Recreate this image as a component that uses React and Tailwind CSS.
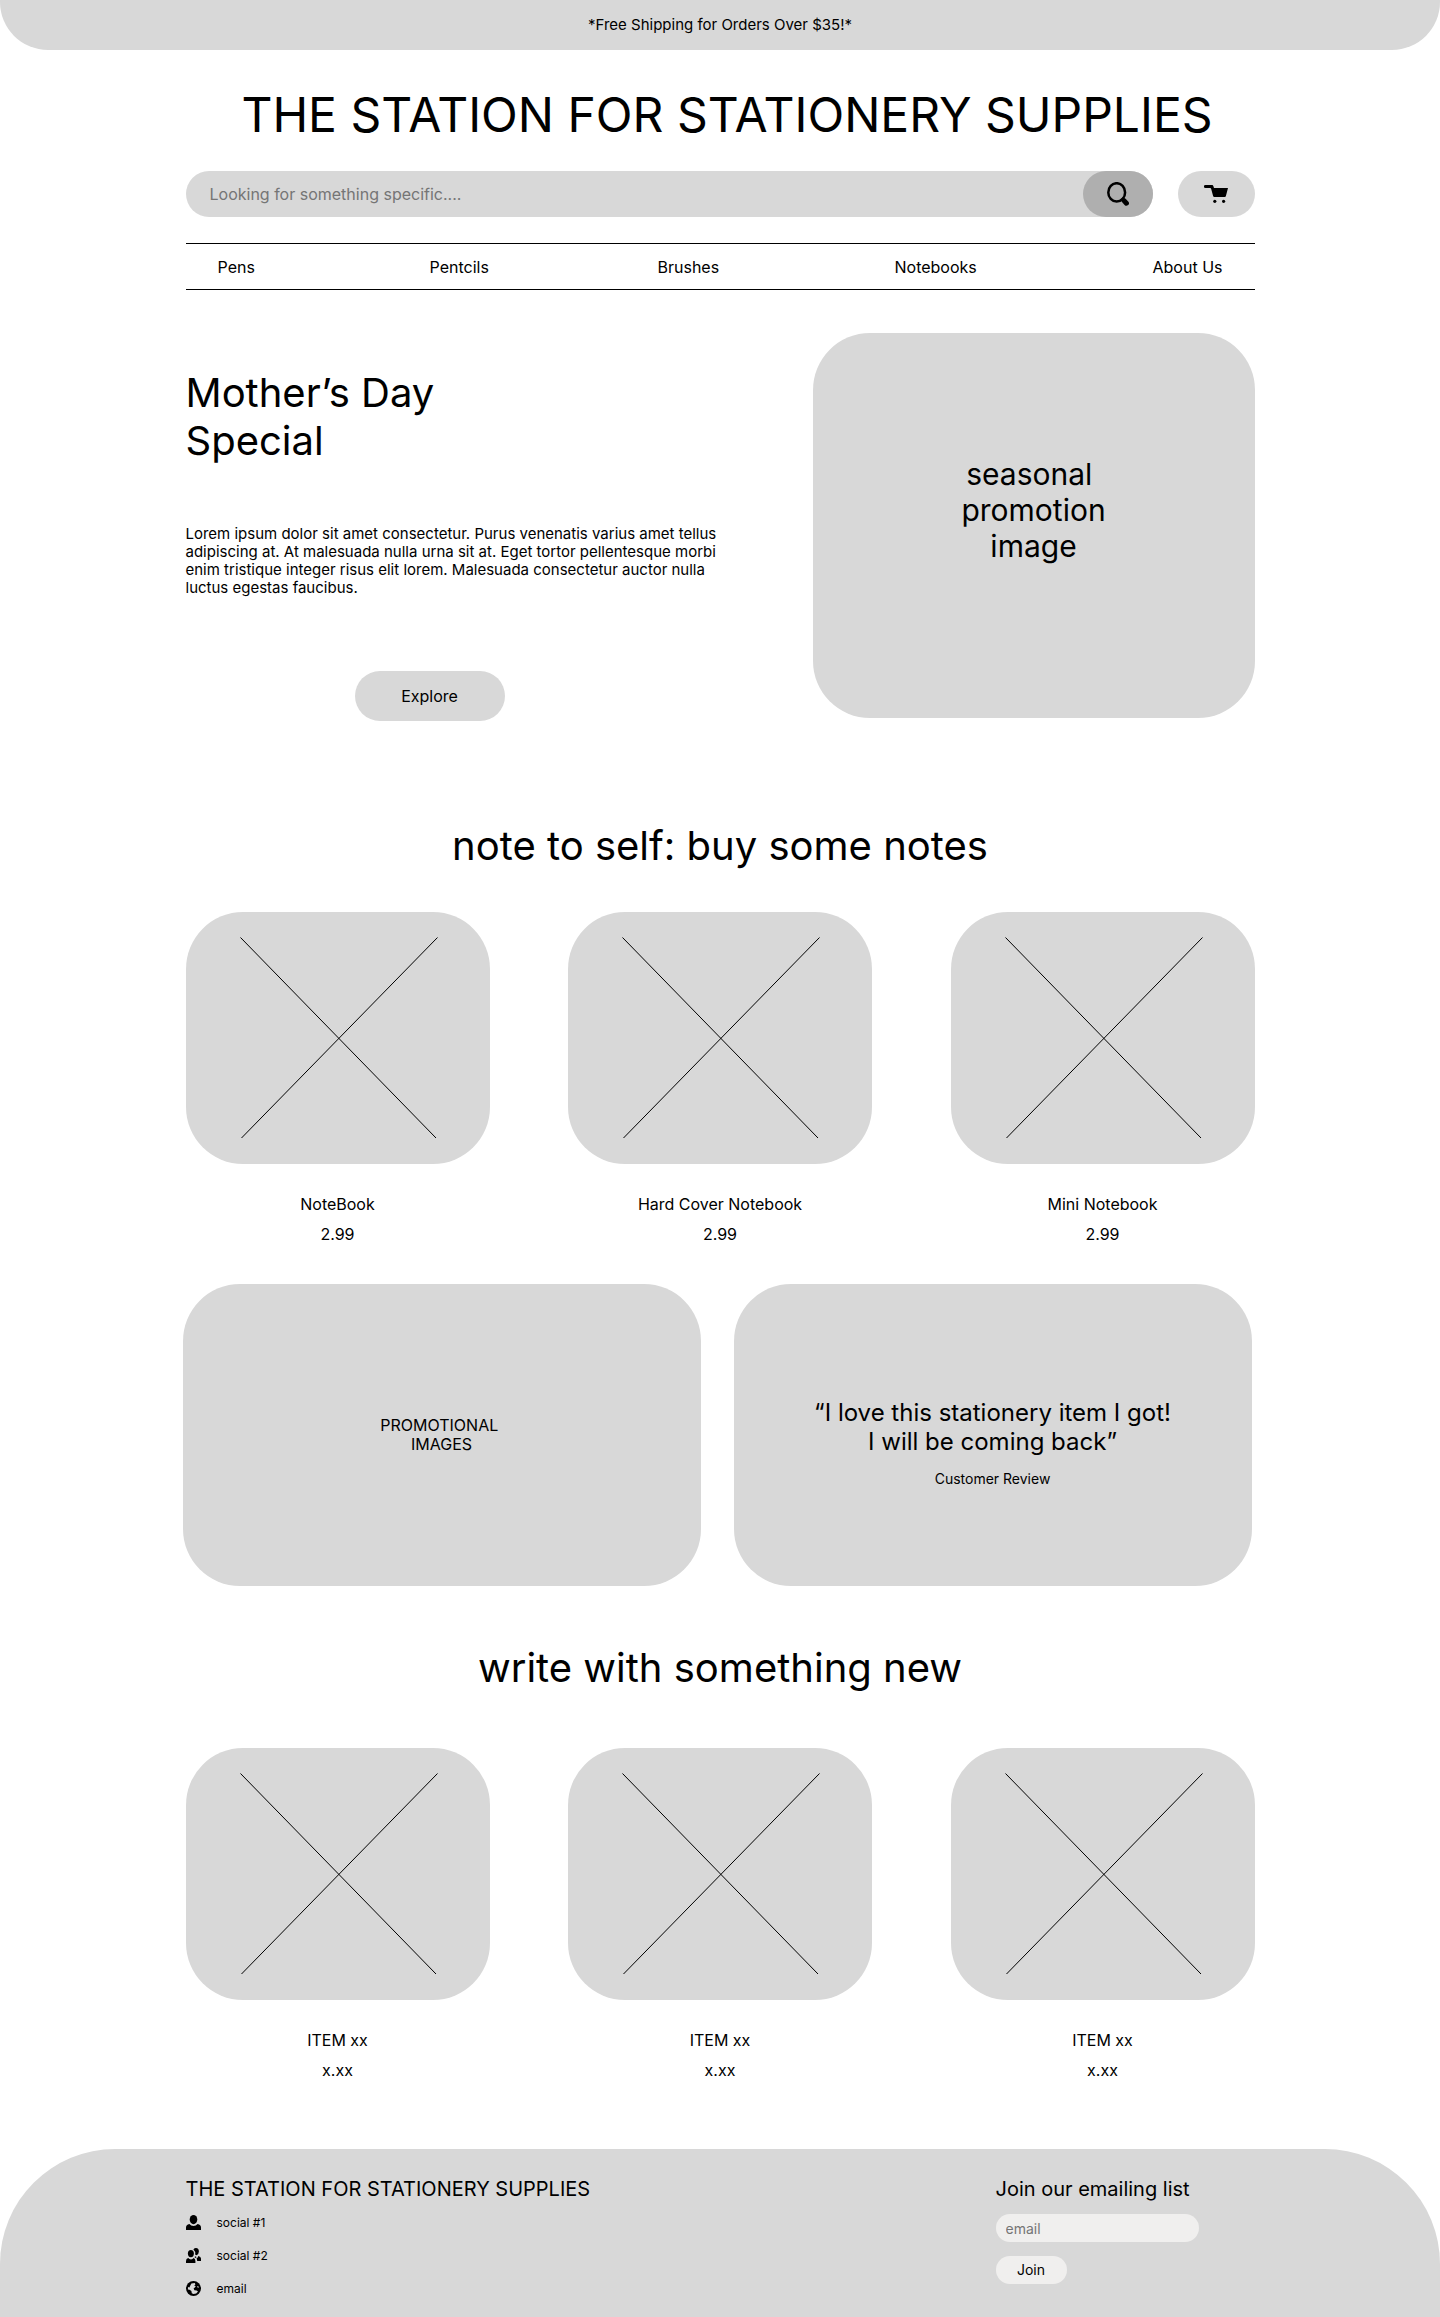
const navItems = ["Pens", "Pentcils", "Brushes", "Notebooks", "About Us"];

const notebooks = [
  { name: "NoteBook", price: "2.99" },
  { name: "Hard Cover Notebook", price: "2.99" },
  { name: "Mini Notebook", price: "2.99" },
];

const writingItems = [
  { name: "ITEM xx", price: "x.xx" },
  { name: "ITEM xx", price: "x.xx" },
  { name: "ITEM xx", price: "x.xx" },
];

function SearchIcon() {
  return (
    <svg width="22" height="24" viewBox="0 0 22 24" fill="none" stroke="black" aria-hidden="true">
      <ellipse cx="9.7" cy="10.4" rx="8.4" ry="9.2" strokeWidth="2.5" />
      <path d="M14.5 16.5 L16.5 18.5" strokeWidth="3.5" />
      <path d="M17 18.6 L19.4 21.2" strokeWidth="5" strokeLinecap="round" />
    </svg>
  );
}

function CartIcon() {
  return (
    <svg width="24" height="18" viewBox="0 0 24 18" fill="black" aria-hidden="true">
      <path d="M1.4 0 H8.2 Q9 0 9.3 0.9 L10 3 H24 L21.9 11 Q21.7 12 20.7 12 H10.3 Q9.4 12 9.1 11 L7.2 4 Q7 3 6.2 3 H1.4 A1.5 1.5 0 0 1 1.4 0 Z" />
      <circle cx="10.8" cy="16.3" r="1.6" />
      <circle cx="19.6" cy="16.3" r="1.6" />
    </svg>
  );
}

function PersonIcon() {
  return (
    <svg width="15" height="15" viewBox="0 0 15 15" fill="black" aria-hidden="true">
      <ellipse cx="7.5" cy="4.6" rx="3.8" ry="4.6" />
      <path d="M0 15 V12.5 Q0 9.8 3.4 9 Q5 11 7.5 11 Q10 11 11.6 9 Q15 9.8 15 12.5 V15 Z" />
    </svg>
  );
}

function PeopleIcon() {
  return (
    <svg width="15" height="15" viewBox="0 0 15 15" fill="black" aria-hidden="true">
      <ellipse cx="4.9" cy="5.6" rx="3" ry="3.7" />
      <path d="M0 15 V13 Q0 10.7 2.2 10.1 Q3.4 11.4 5 11.4 Q6.6 11.4 7.6 10.1 Q9.4 10.8 9.4 13 V15 Z" />
      <path d="M7.4 1.4 Q8.4 0 10 0 Q12.9 0.2 12.9 3.6 Q12.8 6.4 10.6 7.2 Q9.6 7.2 9.2 6.6 Q9.6 3 7.4 1.4 Z" />
      <path d="M8.4 9 L10 8.2 L10.4 9.8 L9.6 10 Z" />
      <path d="M12.3 8 Q15 8.6 15 10.6 V13 H11.2 Q11 11.4 10.5 10.6 Q12 9.6 12.3 8 Z" />
    </svg>
  );
}

function GlobeIcon() {
  return (
    <svg width="15" height="15" viewBox="0 0 15 15" aria-hidden="true">
      <circle cx="7.5" cy="7.5" r="7.5" fill="black" />
      <path
        d="M5.4 2.6 L8.8 1.9 L9.4 3.4 L8.2 4.4 L9.8 5.2 L8.8 6.4 L7.6 7.6 L8.4 9.2 L10.6 9.4 L12 10.4 L10.2 12.4 L7.4 13.1 L5.8 12.2 L5.4 10 L3.6 8.8 L1.9 8.6 L2 6 L3.4 6.4 L4.2 4.8 Z"
        fill="#d8d8d8"
      />
      <path d="M11.4 5 L12.9 5.8 L12.6 6.8 L11.2 6.2 Z" fill="#d8d8d8" />
    </svg>
  );
}

const contacts = [
  { label: "social #1", Icon: PersonIcon },
  { label: "social #2", Icon: PeopleIcon },
  { label: "email", Icon: GlobeIcon },
];

function ProductCard({ name, price }) {
  return (
    <li className="flex w-[304px] flex-col items-center text-base leading-[19px]">
      <div className="flex h-[252px] w-full items-center justify-center rounded-[57px] bg-[#d8d8d8]">
        <svg width="200" height="202" viewBox="0 0 200 202" stroke="black" strokeWidth="1" aria-hidden="true">
          <path d="M2.5 0.5 L198 201 M199.5 0.5 L3.5 201" />
        </svg>
      </div>
      <h3 className="mt-[31px]">{name}</h3>
      <p className="mt-[11px]">{price}</p>
    </li>
  );
}

function ProductRow({ items }) {
  return (
    <ul className="flex flex-wrap justify-between gap-y-10">
      {items.map((item, i) => (
        <ProductCard key={i} {...item} />
      ))}
    </ul>
  );
}

export default function App() {
  return (
    <div className="bg-white font-['Inter',sans-serif] text-black">
      <p className="flex h-[50px] items-center justify-center rounded-b-[48px] bg-[#d8d8d8] text-[15px] leading-[18px]">
        *Free Shipping for Orders Over $35!*
      </p>

      <header className="mx-auto max-w-[1069px]">
        <h1 className="mt-9 pl-3.5 text-center text-5xl leading-[58px]">THE STATION FOR STATIONERY SUPPLIES</h1>
        <div className="mt-[27px] flex gap-[25px]">
          <form className="flex h-[46px] flex-1 rounded-full bg-[#d8d8d8]" onSubmit={(e) => e.preventDefault()}>
            <input
              type="search"
              aria-label="Search products"
              placeholder="Looking for something specific...."
              className="min-w-0 flex-1 rounded-full bg-transparent pl-6 text-base placeholder:text-[#757575]"
            />
            <button
              type="submit"
              aria-label="Search"
              className="flex w-[70px] items-center justify-center rounded-full bg-[#afafaf]"
            >
              <SearchIcon />
            </button>
          </form>
          <button
            type="button"
            aria-label="Cart"
            className="flex h-[46px] w-[77px] items-center justify-center rounded-full bg-[#d8d8d8]"
          >
            <CartIcon />
          </button>
        </div>
        <nav className="mt-[26px] border-y border-black px-8 pt-[14px] pb-3">
          <ul className="grid grid-cols-[212fr_228fr_237fr_258fr_70fr] text-base leading-[19px] whitespace-nowrap">
            {navItems.map((item) => (
              <li key={item}>
                <a href="#">{item}</a>
              </li>
            ))}
          </ul>
        </nav>
      </header>

      <main>
        <div className="mx-auto max-w-[1069px]">
          <section className="mt-[43px] flex justify-between">
            <div className="max-w-[540px] pt-9">
              <h2 className="text-[40px] leading-[48px]">
                Mother’s Day
                <br />
                Special
              </h2>
              <p className="mt-[60px] text-[15px] leading-[18px]">
                Lorem ipsum dolor sit amet consectetur. Purus venenatis varius amet tellus adipiscing at. At malesuada
                nulla urna sit at. Eget tortor pellentesque morbi enim tristique integer risus elit lorem. Malesuada
                consectetur auctor nulla luctus egestas faucibus.
              </p>
              <button
                type="button"
                className="mt-[74px] ml-[169px] block h-[50px] w-[150px] rounded-full bg-[#d8d8d8] text-base"
              >
                Explore
              </button>
            </div>
            <div className="h-[385px] w-[442px] rounded-[57px] bg-[#d8d8d8] pt-[123px] text-center text-3xl leading-9">
              seasonal&nbsp;
              <br />
              promotion
              <br />
              image
            </div>
          </section>

          <section className="mt-[101px]">
            <h2 className="mb-[42px] text-center text-[40px] leading-[48px]">note to self: buy some notes</h2>
            <ProductRow items={notebooks} />
          </section>
        </div>

        <section className="mx-auto mt-10 grid max-w-[1075px] grid-cols-2 gap-[33px] pr-1.5 text-center">
          <div className="flex h-[302px] flex-col items-center justify-center rounded-[57px] bg-[#d8d8d8] text-base leading-[19px]">
            <p>
              PROMOTIONAL&nbsp;
              <br />
              IMAGES
            </p>
          </div>
          <figure className="flex h-[302px] flex-col items-center rounded-[57px] bg-[#d8d8d8] pt-[114px]">
            <blockquote className="text-2xl leading-[29px]">
              “I love this stationery item I got!
              <br />I will be coming back”
            </blockquote>
            <figcaption className="mt-[14px] text-sm leading-[17px]">Customer Review</figcaption>
          </figure>
        </section>

        <section className="mx-auto mt-[58px] max-w-[1069px]">
          <h2 className="mb-14 text-center text-[40px] leading-[48px]">write with something new</h2>
          <ProductRow items={writingItems} />
        </section>
      </main>

      <footer className="mt-[69px] rounded-t-[115px] bg-[#d8d8d8] pt-7 pb-5">
        <div className="mx-auto flex max-w-[1069px] justify-between">
          <div>
            <h2 className="text-xl leading-6">THE STATION FOR STATIONERY SUPPLIES</h2>
            <ul className="mt-[14px] flex flex-col gap-[17px] text-xs leading-4">
              {contacts.map(({ label, Icon }) => (
                <li key={label}>
                  <a href="#" className="flex gap-4">
                    <Icon />
                    {label}
                  </a>
                </li>
              ))}
            </ul>
          </div>
          <form className="w-[259px]" onSubmit={(e) => e.preventDefault()}>
            <label htmlFor="email" className="block text-xl leading-6">
              Join our emailing list
            </label>
            <input
              id="email"
              type="email"
              placeholder="email"
              className="mt-[13px] block h-7 w-[203px] rounded-full bg-[#f0efee] px-2.5 text-sm placeholder:text-[#757575]"
            />
            <button type="submit" className="mt-[14px] block h-7 w-[71px] rounded-full bg-[#f0efee] text-sm">
              Join
            </button>
          </form>
        </div>
      </footer>
    </div>
  );
}
